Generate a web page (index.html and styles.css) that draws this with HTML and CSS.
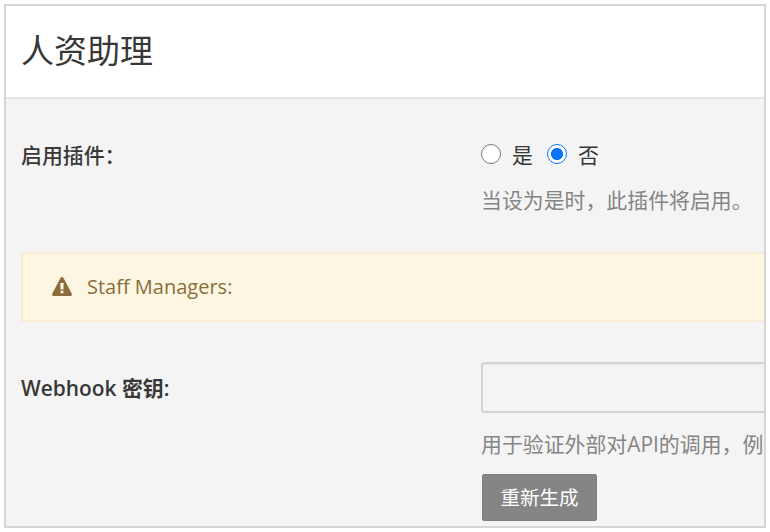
FILE: index.html
```html
<!DOCTYPE html>
<html lang="zh-CN">
<head>
<meta charset="utf-8">
<title>人资助理</title>
<link rel="stylesheet" href="styles.css">
</head>
<body>
<main class="panel">
  <header class="panel-header"><h1>人资助理</h1></header>
  <form class="settings">
    <div class="row row-enable">
      <div class="label">启用插件：</div>
      <div class="field">
        <div class="radios">
          <label><input type="radio" name="enabled"><span>是</span></label>
          <label><input type="radio" name="enabled" checked><span>否</span></label>
        </div>
        <p class="help">当设为是时，此插件将启用。</p>
      </div>
    </div>
    <div class="alert">
      <svg class="alert-icon" viewBox="0 0 20 19"><path fill="currentColor" fill-rule="evenodd" d="M10 0c.7 0 1.200.3 1.500.9l8.200 15.600c.6 1.200 0 2.500-1.400 2.500H1.700C.3 19-.3 17.700.3 16.500L8.500.9C8.800.3 9.300 0 10 0zM8.300 6l.3 6.500h2.800l.3-6.500zM8.600 13.700v2.600h2.800v-2.600z"/></svg>
      <span>Staff Managers:</span>
    </div>
    <div class="row row-key">
      <div class="label">Webhook 密钥:</div>
      <div class="field">
        <input class="text-input" type="text">
        <p class="help">用于验证外部对API的调用，例</p>
        <button class="btn" type="button">重新生成</button>
      </div>
    </div>
  </form>
</main>
</body>
</html>
```
FILE: styles.css
```css
* { box-sizing: border-box; }
body {
  margin: 0;
  padding: 4px;
  height: 532px;
  overflow: hidden;
  background: #fff;
  color: #383838;
  font-family: "Open Sans", "Noto Sans CJK SC", sans-serif;
  font-size: 20.9px;
}
.panel {
  width: 762px;
  height: 524px;
  border: 2px solid #d6d6d6;
  background: #f4f4f4;
  overflow: hidden;
}
.panel-header {
  height: 93px;
  padding: 20px 15px 0;
  background: #fff;
  border-bottom: 2px solid #e5e5e5;
}
h1 {
  margin: 0;
  font-size: 33px;
  font-weight: 400;
  line-height: 50px;
}
.settings { padding-left: 15px; }
.row {
  display: grid;
  grid-template-columns: 460px 400px;
}
.row-enable { height: 153px; padding-top: 40px; }
.label { font-weight: 600; line-height: 32px; white-space: nowrap; }
.row-enable .label { font-weight: 500; }
.radios { display: flex; gap: 15px; height: 32px; }
.radios label { display: flex; align-items: center; gap: 11px; line-height: 32px; }
.radios label + label { margin-left: -1px; }
.radios input {
  appearance: none;
  width: 20px;
  height: 20px;
  margin: -3px 0 0;
  border: 1.5px solid #777;
  border-radius: 50%;
  background: #fff;
}
.radios input:checked {
  border-color: #0b73f7;
  background: radial-gradient(circle, #0b73f7 5.700px, #fff 6.300px);
}
.help {
  margin: 14px 0 0;
  color: #858585;
  line-height: 30px;
  white-space: nowrap;
}
.alert {
  display: flex;
  align-items: center;
  gap: 15px;
  width: 900px;
  height: 70px;
  padding: 0 29px 1px;
  border: 2px solid #faebd4;
  background: #fcf6e2;
  color: #8a6d3b;
  font-size: 20px;
}
.alert-icon { width: 20px; height: 19px; }
.row-key { padding-top: 40px; }
.row-key .label { padding-top: 10px; }
.text-input {
  display: block;
  width: 400px;
  height: 51px;
  border: 2px solid #d3d3d3;
  border-radius: 3px;
  background: #f4f4f4;
  box-shadow: inset 0 1px 1px #e9e9e9;
}
.row-key .help { margin: 16px 0 0; }
.btn {
  display: block;
  width: 115px;
  height: 47px;
  margin: 15px 0 0 1px;
  padding: 0 0 2px;
  border: 1px solid #7e7e7e;
  border-radius: 2px;
  background: #858585;
  color: #fff;
  font: 19.500px "Open Sans", "Noto Sans CJK SC", sans-serif;
}
```
